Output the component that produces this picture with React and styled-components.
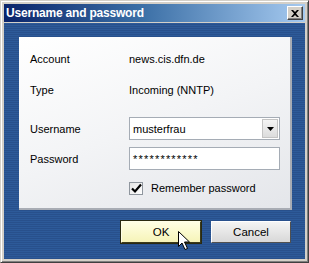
import React from 'react'
import styled, { createGlobalStyle } from 'styled-components'

const GlobalStyle = createGlobalStyle`
  html, body {
    margin: 0;
    padding: 0;
    background: #d4d0c8;
  }
  body {
    font-family: "Liberation Sans", Arial, sans-serif;
  }
`

const Window = styled.div`
  width: 309px;
  height: 263px;
  box-sizing: border-box;
  background: #d4d0c8;
  border: 1px solid;
  border-color: #d4d0c8 #404040 #404040 #d4d0c8;
  box-shadow: inset 1px 1px 0 #ffffff, inset -1px -1px 0 #808080;
  padding: 3px;
  display: flex;
  flex-direction: column;
`

const TitleBar = styled.div`
  height: 18px;
  background: linear-gradient(to right, #0a246a 0%, #3a6ea5 45%, #a6caf0 100%);
  display: flex;
  align-items: center;
  justify-content: space-between;
  padding: 0 2px 0 2px;
`

const Title = styled.span`
  color: #ffffff;
  font-weight: bold;
  font-size: 12px;
  letter-spacing: -0.2px;
`

const CloseButton = styled.div`
  width: 16px;
  height: 14px;
  box-sizing: border-box;
  background: #d4d0c8;
  border: 1px solid;
  border-color: #ffffff #404040 #404040 #ffffff;
  box-shadow: inset -1px -1px 0 #808080;
  display: flex;
  align-items: center;
  justify-content: center;
`

const Body = styled.div`
  flex: 1;
  margin-top: 1px;
  background: repeating-linear-gradient(
    to bottom,
    #2d5a99 0px,
    #2d5a99 1px,
    #28508c 1px,
    #28508c 2px
  );
  padding: 14px 13px 0 15px;
  display: flex;
  flex-direction: column;
`

const Panel = styled.div`
  height: 173px;
  box-sizing: border-box;
  background: linear-gradient(160deg, #ffffff 0%, #f3f4f6 50%, #e4e6ea 100%);
  border-right: 2px solid #a8acb4;
  border-bottom: 2px solid #a8acb4;
  padding: 13px 0 0 11px;
  display: grid;
  grid-template-columns: 99px 151px;
  grid-template-rows: 18px 13px 18px 18px 23px 7px 23px 11px 14px;
  align-items: center;
  font-size: 11px;
  color: #000000;
`

const Label = styled.div`
  grid-row: ${p => p.$row};
  grid-column: 1;
`

const Value = styled.div`
  grid-row: ${p => p.$row};
  grid-column: 2;
`

const Field = styled.div`
  grid-row: ${p => p.$row};
  grid-column: 2;
  height: 23px;
  box-sizing: border-box;
  border: 1px solid #a5acb5;
  background: #ffffff;
  display: flex;
  align-items: center;
  padding-left: 3px;
  letter-spacing: ${p => (p.$secret ? '1.2px' : 'normal')};
`

const Combo = styled(Field)`
  padding-right: 1px;
  justify-content: space-between;
`

const DropButton = styled.div`
  width: 16px;
  height: 19px;
  box-sizing: border-box;
  background: linear-gradient(to bottom, #f4f4f4, #dcdcdc);
  border: 1px solid #c4c4c4;
  display: flex;
  align-items: center;
  justify-content: center;
`

const CheckRow = styled.div`
  grid-row: ${p => p.$row};
  grid-column: 2;
  display: flex;
  align-items: center;
  gap: 8px;
`

const CheckBox = styled.div`
  width: 14px;
  height: 13px;
  box-sizing: border-box;
  border: 1px solid #8f969e;
  background: linear-gradient(135deg, #e4e4e4, #ffffff);
  display: flex;
  align-items: center;
  justify-content: center;
`

const ButtonRow = styled.div`
  display: flex;
  justify-content: flex-end;
  gap: 10px;
  margin-top: 11px;
  padding-right: 1px;
`

const Button = styled.div`
  position: relative;
  width: 80px;
  height: 22px;
  box-sizing: border-box;
  font-size: 11.5px;
  display: flex;
  align-items: center;
  justify-content: center;
  border: 1px solid ${p => (p.$primary ? '#3a3a1a' : '#505050')};
  border-top-color: ${p => (p.$primary ? '#ffffe8' : '#ffffff')};
  border-left-color: ${p => (p.$primary ? '#ffffe8' : '#ffffff')};
  background: ${p =>
    p.$primary
      ? 'linear-gradient(to bottom, #ffffe4, #f6f4b8)'
      : 'linear-gradient(to bottom, #f4f4f4, #d8d8d8)'};
  box-shadow: ${p => (p.$primary ? '0 0 0 1px #2a2a10' : 'none')};
`

const Cursor = styled.svg`
  position: absolute;
  left: 56px;
  top: 9px;
`

export default function App() {
  return (
    <>
      <GlobalStyle />
      <Window>
        <TitleBar>
          <Title>Username and password</Title>
          <CloseButton>
            <svg width="8" height="7" viewBox="0 0 8 7">
              <path d="M0 0h2l2 2 2-2h2L5 3.5 8 7H6L4 5 2 7H0l3-3.5z" fill="#000" />
            </svg>
          </CloseButton>
        </TitleBar>
        <Body>
          <Panel>
            <Label $row={1}>Account</Label>
            <Value $row={1}>news.cis.dfn.de</Value>
            <Label $row={3}>Type</Label>
            <Value $row={3}>Incoming (NNTP)</Value>
            <Label $row={5}>Username</Label>
            <Combo $row={5}>
              musterfrau
              <DropButton>
                <svg width="7" height="4" viewBox="0 0 7 4">
                  <path d="M0 0h7L3.5 4z" fill="#000" />
                </svg>
              </DropButton>
            </Combo>
            <Label $row={7}>Password</Label>
            <Field $row={7} $secret>************</Field>
            <CheckRow $row={9}>
              <CheckBox>
                <svg width="11" height="11" viewBox="0 0 11 11">
                  <path d="M1 5.5l3 3 6-7" stroke="#000" strokeWidth="2.2" fill="none" />
                </svg>
              </CheckBox>
              Remember password
            </CheckRow>
          </Panel>
          <ButtonRow>
            <Button $primary>
              OK
              <Cursor width="12" height="20" viewBox="0 0 12 20">
                <path d="M0.5 0.5v15l3.5-3.5 3 6.5 2.5-1-3-6.5h5z" fill="#fff" stroke="#000" strokeWidth="1" />
              </Cursor>
            </Button>
            <Button>Cancel</Button>
          </ButtonRow>
        </Body>
      </Window>
    </>
  )
}
